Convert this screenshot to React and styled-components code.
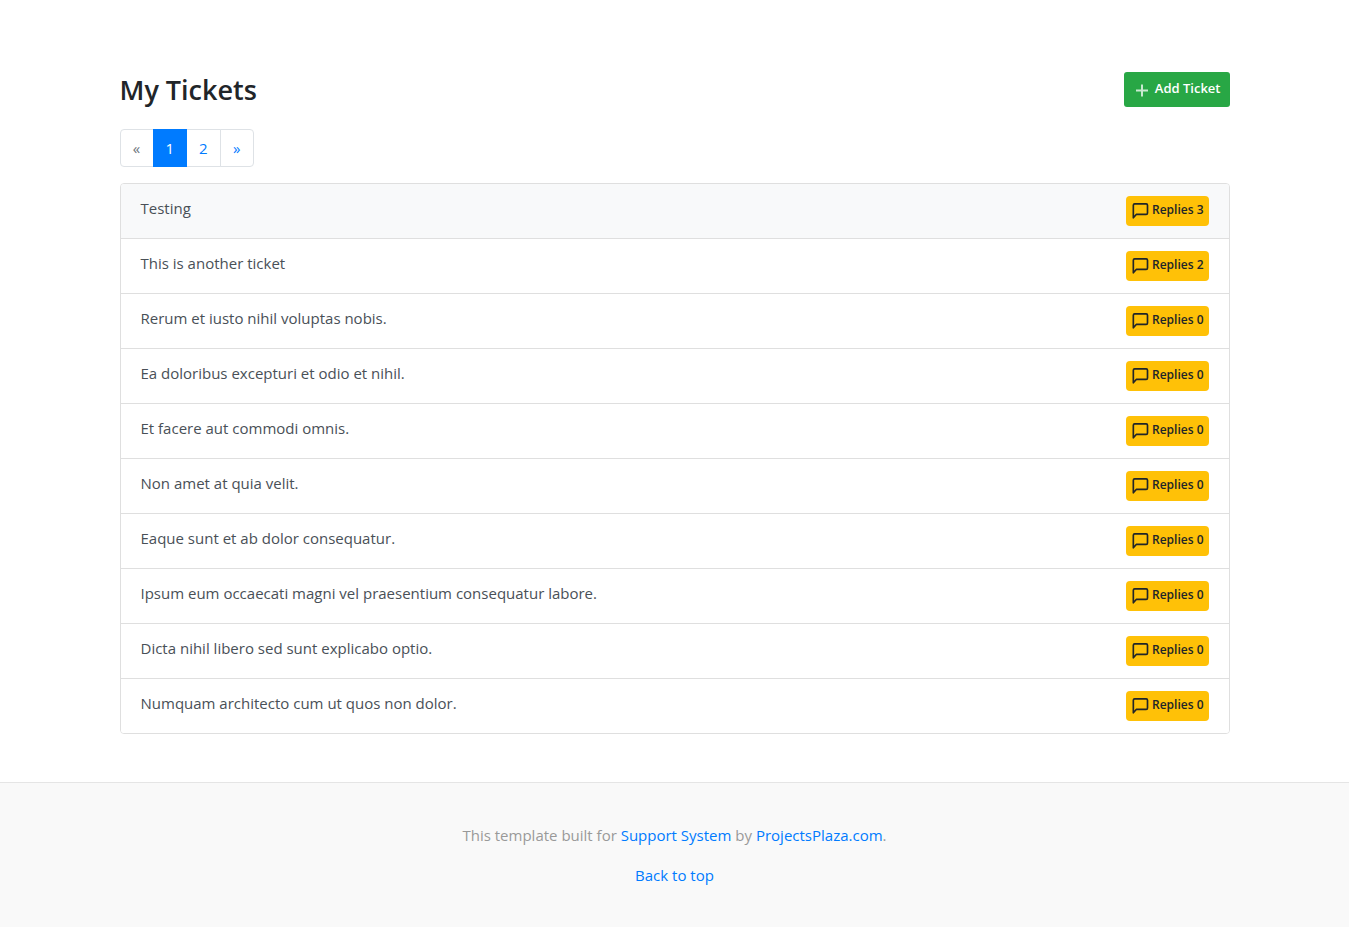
import React from "react";
import styled, { createGlobalStyle } from "styled-components";

const GlobalStyle = createGlobalStyle`
  *, *::before, *::after { box-sizing: border-box; }
  body {
    margin: 0;
    background: #fff;
    color: #212529;
    font-family: "Segoe UI", "Open Sans", "Noto Sans", sans-serif;
    font-size: 15px;
    line-height: 24px;
  }
`;

const Container = styled.main`
  width: 100%;
  max-width: 1140px;
  margin: 0 auto;
  padding: 72px 15px 48px;
`;

const Header = styled.header`
  display: flex;
  align-items: center;
  justify-content: space-between;
  margin-bottom: 22px;
`;

const Title = styled.h1`
  margin: 0;
  font-size: 27px;
  font-weight: 600;
  line-height: 35px;
`;

const AddButton = styled.button`
  display: flex;
  align-items: center;
  gap: 1px;
  height: 35px;
  padding: 0 9px 0 6px;
  border: 0;
  border-radius: 3px;
  background: #28a745;
  color: #fff;
  font: inherit;
  font-size: 13px;
  font-weight: 600;
  line-height: 21px;
  cursor: pointer;
`;

const ButtonLabel = styled.span`
  padding-bottom: 2px;
`;

const Pagination = styled.ul`
  display: flex;
  margin: 0 0 16px;
  padding: 0;
  list-style: none;
`;

const PageItem = styled.li`
  & + & { margin-left: -1px; }
  &:first-child > a { border-radius: 4px 0 0 4px; }
  &:last-child > a { border-radius: 0 4px 4px 0; }
`;

const PageLink = styled.a`
  position: relative;
  z-index: ${(p) => (p.$active ? 1 : 0)};
  display: block;
  min-width: 34px;
  padding: 6px 12px;
  border: 1px solid ${(p) => (p.$active ? "#007bff" : "#dee2e6")};
  background: ${(p) => (p.$active ? "#007bff" : "#fff")};
  color: ${(p) => (p.$active ? "#fff" : p.$muted ? "#6c757d" : "#007bff")};
  text-align: center;
  text-decoration: none;
`;

const TicketList = styled.nav`
  display: flex;
  flex-direction: column;
  border: 1px solid #dfdfdf;
  border-radius: 4px;
  overflow: hidden;
`;

const TicketRow = styled.a`
  display: flex;
  align-items: flex-start;
  justify-content: space-between;
  padding: 12px 20px;
  background: ${(p) => (p.$highlighted ? "#f8f9fa" : "#fff")};
  color: #495057;
  text-decoration: none;
  & + & { border-top: 1px solid #dfdfdf; }
`;

const Replies = styled.span`
  display: flex;
  align-items: center;
  gap: 2px;
  height: 30px;
  padding: 0 5px 0 4px;
  border-radius: 4px;
  background: #ffc107;
  color: #212529;
  font-size: 12px;
  font-weight: 600;
  line-height: 12px;
  white-space: nowrap;
`;

const Footer = styled.footer`
  display: flex;
  flex-direction: column;
  gap: 16px;
  padding: 40px 0;
  border-top: 1px solid #e5e5e5;
  background: #f9f9f9;
  color: #999;
  text-align: center;
`;

const FooterText = styled.p`
  margin: 0;
`;

const FooterLink = styled.a`
  color: #007bff;
  text-decoration: none;
`;

const PlusIcon = () => (
  <svg width="24" height="24" viewBox="0 0 24 24" fill="none" stroke="currentColor" strokeWidth="2" strokeOpacity="0.75" aria-hidden="true">
    <path d="M12 6.5v12M6 12.5h12" />
  </svg>
);

const MessageIcon = () => (
  <svg width="20" height="20" viewBox="0 0 24 24" fill="none" stroke="currentColor" strokeWidth="2" strokeLinecap="round" strokeLinejoin="round" aria-hidden="true">
    <path d="M21 14.5a1.6 1.6 0 0 1-1.6 1.6H7.5L4 20.2V5a1.6 1.6 0 0 1 1.6-1.6h13.8A1.6 1.6 0 0 1 21 5z" />
  </svg>
);

const tickets = [
  ["Testing", 3],
  ["This is another ticket", 2],
  ["Rerum et iusto nihil voluptas nobis.", 0],
  ["Ea doloribus excepturi et odio et nihil.", 0],
  ["Et facere aut commodi omnis.", 0],
  ["Non amet at quia velit.", 0],
  ["Eaque sunt et ab dolor consequatur.", 0],
  ["Ipsum eum occaecati magni vel praesentium consequatur labore.", 0],
  ["Dicta nihil libero sed sunt explicabo optio.", 0],
  ["Numquam architecto cum ut quos non dolor.", 0],
];

export default function App() {
  return (
    <>
      <GlobalStyle />
      <Container>
        <Header>
          <Title>My Tickets</Title>
          <AddButton type="button">
            <PlusIcon />
            <ButtonLabel>Add Ticket</ButtonLabel>
          </AddButton>
        </Header>
        <Pagination>
          <PageItem><PageLink href="#" $muted aria-label="Previous">«</PageLink></PageItem>
          <PageItem><PageLink href="#" $active aria-current="page">1</PageLink></PageItem>
          <PageItem><PageLink href="#">2</PageLink></PageItem>
          <PageItem><PageLink href="#" aria-label="Next">»</PageLink></PageItem>
        </Pagination>
        <TicketList>
          {tickets.map(([title, replies], i) => (
            <TicketRow key={title} href="#" $highlighted={i === 0}>
              <span>{title}</span>
              <Replies>
                <MessageIcon />
                <ButtonLabel>Replies {replies}</ButtonLabel>
              </Replies>
            </TicketRow>
          ))}
        </TicketList>
      </Container>
      <Footer>
        <FooterText>
          This template built for <FooterLink href="#">Support System</FooterLink> by{" "}
          <FooterLink href="#">ProjectsPlaza.com</FooterLink>.
        </FooterText>
        <FooterText><FooterLink href="#">Back to top</FooterLink></FooterText>
      </Footer>
    </>
  );
}
